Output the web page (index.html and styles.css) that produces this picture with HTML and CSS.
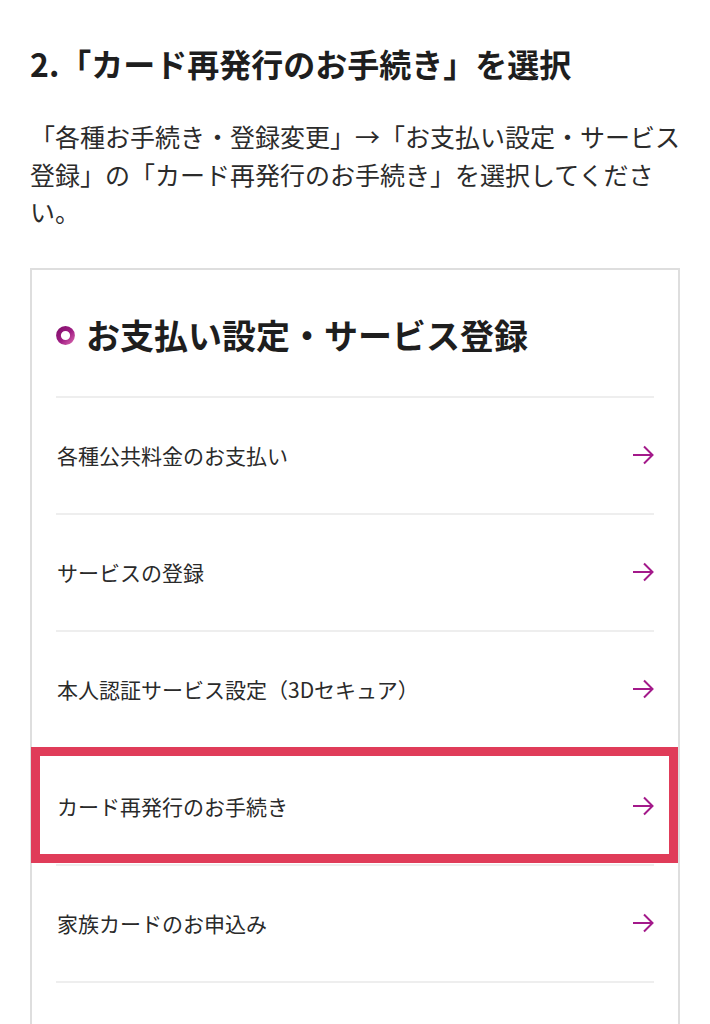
FILE: index.html
```html
<!DOCTYPE html>
<html lang="ja">
<head>
<meta charset="utf-8">
<title>カード再発行のお手続き</title>
<link rel="stylesheet" href="styles.css">
</head>
<body>
<main class="page">
  <h2 class="step-title">2.「カード再発行のお手続き」を選択</h2>
  <p class="step-text">「各種お手続き・登録変更」→「お支払い設定・サービス登録」の「カード再発行のお手続き」を選択してください。</p>

  <section class="card">
    <div class="card-head">
      <svg class="ring" width="19" height="19" viewBox="0 0 19 19" aria-hidden="true">
        <defs>
          <linearGradient id="rg" x1="0" y1="0" x2="1" y2="1">
            <stop offset="0" stop-color="#86106f"/>
            <stop offset="0.55" stop-color="#a01e84"/>
            <stop offset="1" stop-color="#cf5aa6"/>
          </linearGradient>
        </defs>
        <circle cx="9.5" cy="9.5" r="7" fill="none" stroke="url(#rg)" stroke-width="4.8"/>
      </svg>
      <h3 class="card-title">お支払い設定・サービス登録</h3>
    </div>
    <ul class="menu">
      <li class="menu-item"><span>各種公共料金のお支払い</span><svg class="arrow" width="22" height="20" viewBox="0 0 22 20"><path d="M1 10H20.5M12 1.5L20.5 10L12 18.5" fill="none" stroke="#a3198a" stroke-width="2"/></svg></li>
      <li class="menu-item"><span>サービスの登録</span><svg class="arrow" width="22" height="20" viewBox="0 0 22 20"><path d="M1 10H20.5M12 1.5L20.5 10L12 18.5" fill="none" stroke="#a3198a" stroke-width="2"/></svg></li>
      <li class="menu-item"><span>本人認証サービス設定（3Dセキュア）</span><svg class="arrow" width="22" height="20" viewBox="0 0 22 20"><path d="M1 10H20.5M12 1.5L20.5 10L12 18.5" fill="none" stroke="#a3198a" stroke-width="2"/></svg></li>
      <li class="menu-item is-highlighted"><span>カード再発行のお手続き</span><svg class="arrow" width="22" height="20" viewBox="0 0 22 20"><path d="M1 10H20.5M12 1.5L20.5 10L12 18.5" fill="none" stroke="#a3198a" stroke-width="2"/></svg></li>
      <li class="menu-item"><span>家族カードのお申込み</span><svg class="arrow" width="22" height="20" viewBox="0 0 22 20"><path d="M1 10H20.5M12 1.5L20.5 10L12 18.5" fill="none" stroke="#a3198a" stroke-width="2"/></svg></li>
      <li class="menu-item"><span>&nbsp;</span></li>
    </ul>
  </section>
</main>
</body>
</html>
```
FILE: styles.css
```css
html, body {
  margin: 0;
  padding: 0;
  background: #ffffff;
}

body {
  font-family: "Noto Sans CJK JP", "Noto Sans", sans-serif;
  color: #222222;
}

.page {
  padding: 0 30px;
  overflow: hidden;
  height: 1024px;
}

.step-title {
  margin: 43px 0 0;
  font-size: 32px;
  line-height: 40px;
  font-weight: 700;
  color: #1e1e1e;
  letter-spacing: 0;
}

.step-text {
  margin: 35px 0 0;
  font-size: 25px;
  line-height: 37.5px;
  font-weight: 400;
  color: #2b2b2b;
}

.card {
  margin-top: 37px;
  border: 2px solid #dedede;
  padding: 0 24px;
  background: #fff;
}

.card-head {
  height: 126px;
  display: flex;
  align-items: center;
  padding-top: 4px;
  box-sizing: border-box;
}

.ring {
  flex: none;
  margin-right: 11px;
  margin-top: 2px;
}

.card-title {
  margin: 0;
  font-size: 34px;
  line-height: 40px;
  font-weight: 700;
  color: #1e1e1e;
}

.menu {
  list-style: none;
  margin: 0;
  padding: 0;
}

.menu-item {
  position: relative;
  height: 115px;
  border-top: 2px solid #eeeeee;
  display: flex;
  align-items: center;
  justify-content: space-between;
  font-size: 21px;
  color: #2a2a2a;
  padding-left: 1px;
}

.arrow {
  flex: none;
  margin-right: 0;
}

.is-highlighted::after {
  content: "";
  position: absolute;
  top: -2px;
  left: -25px;
  right: -24px;
  bottom: 1px;
  border: 9px solid #e03c59;
  pointer-events: none;
}
```
